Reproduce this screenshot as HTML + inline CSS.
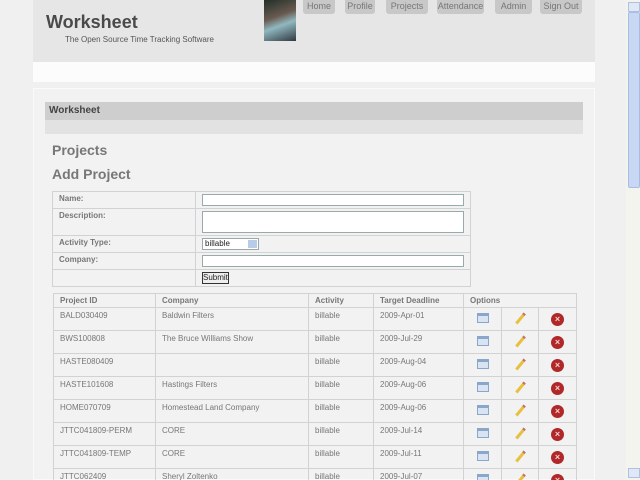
<!DOCTYPE html>
<html style="height:480px;overflow:hidden"><head><style>
*{margin:0;padding:0;box-sizing:border-box}
body{width:640px;height:480px;overflow:hidden;background:#f0f0f0;font-family:"Liberation Sans",sans-serif;position:relative}
.a{position:absolute}
.nav{position:absolute;top:0;height:14px;background:#c8c8c8;border-radius:0 0 3px 3px;color:#777;font-size:9px;text-align:center;line-height:13px}
table{border-collapse:collapse;position:absolute}
td{border:1px solid #d2d2d2;font-size:8px;color:#777;vertical-align:top;padding:3px 6px}
.f td{font-weight:bold;padding:2px 6px}
input.t{display:block;width:262px;height:12px;border:1px solid #9aa;background:#fff}
.cal{display:inline-block;width:12px;height:10px;border:1px solid #8aa6c8;background:#d8e4f2;border-top:3px solid #8aa6c8}
.x{display:inline-block;width:13px;height:13px;border-radius:50%;background:#b02828;color:#f4d0d0;font-size:9px;line-height:13px;text-align:center;font-weight:bold}
.p{display:inline-block;width:3px;height:13px;background:#e8c040;transform:rotate(40deg);border-top:2px solid #c07070}
.o td{text-align:center;vertical-align:middle;padding:0}
.o td.l{text-align:left;vertical-align:top;padding:3px 6px}
</style></head><body>
<div class="a" style="left:33px;top:0;width:562px;height:62px;background:#e6e6e6"></div>
<div class="a" style="left:33px;top:62px;width:562px;height:20px;background:#fcfcfc"></div>
<div class="a" style="left:46px;top:12px;font-size:18px;font-weight:bold;color:#4a4a4a">Worksheet</div>
<div class="a" style="left:65px;top:35px;font-size:8px;color:#555">The Open Source Time Tracking Software</div>
<div class="a" style="left:264px;top:0;width:32px;height:41px;background:linear-gradient(160deg,#203028,#6a5a50 40%,#90b8c0 60%,#303840)"></div>
<div class="nav" style="left:303px;width:32px">Home</div>
<div class="nav" style="left:345px;width:30px">Profile</div>
<div class="nav" style="left:386px;width:42px">Projects</div>
<div class="nav" style="left:437px;width:47px">Attendance</div>
<div class="nav" style="left:495px;width:37px">Admin</div>
<div class="nav" style="left:540px;width:42px">Sign Out</div>
<div class="a" style="left:33px;top:88px;width:562px;height:392px;background:#f2f2f2;border:1px solid #fafafa"></div>
<div class="a" style="left:45px;top:102px;width:538px;height:18px;background:#cecece;font-size:10px;font-weight:bold;color:#444;padding:3px 4px">Worksheet</div>
<div class="a" style="left:45px;top:120px;width:538px;height:14px;background:#e2e2e2"></div>
<div class="a" style="left:52px;top:142px;font-size:14px;font-weight:bold;color:#777">Projects</div>
<div class="a" style="left:52px;top:166px;font-size:14px;font-weight:bold;color:#777">Add Project</div>
<table class="f" style="left:52px;top:191px;width:419px">
<tr style="height:16px"><td style="width:145px">Name:</td><td><input class="t"></td></tr>
<tr style="height:27px"><td>Description:</td><td><div style="width:262px;height:22px;border:1px solid #9aa;background:#fff"></div></td></tr>
<tr style="height:17px"><td>Activity Type:</td><td><div style="width:57px;height:12px;border:1px solid #9aa;background:#fff;font-weight:normal;color:#222;padding-left:2px;position:relative">billable<span style="position:absolute;right:1px;top:1px;width:9px;height:8px;background:#b8cce8"></span></div></td></tr>
<tr style="height:17px"><td>Company:</td><td><input class="t"></td></tr>
<tr style="height:17px"><td></td><td><div style="width:27px;height:12px;border:1px solid #333;background:#eee;font-weight:normal;color:#222;font-size:8px;line-height:10px">Submit</div></td></tr>
</table>
<table class="o" style="left:53px;top:293px;width:524px">
<tr style="height:14px"><td style="width:102px;text-align:left;padding:2px 6px;font-weight:bold">Project ID</td><td style="width:153px;text-align:left;padding:2px 6px;font-weight:bold">Company</td><td style="width:65px;text-align:left;padding:2px 6px;font-weight:bold">Activity</td><td style="width:90px;text-align:left;padding:2px 6px;font-weight:bold">Target Deadline</td><td colspan="3" style="text-align:left;padding:2px 6px;font-weight:bold">Options</td></tr>
</table>
<table class="o" style="left:53px;top:307px;width:524px">
<tr style="height:23px"><td class="l" style="width:102px">BALD030409</td><td class="l" style="width:153px">Baldwin Filters</td><td class="l" style="width:65px">billable</td><td class="l" style="width:90px">2009-Apr-01</td><td style="width:38px"><span class="cal"></span></td><td style="width:37px"><span class="p"></span></td><td><span class="x">×</span></td></tr>
<tr style="height:23px"><td class="l">BWS100808</td><td class="l">The Bruce Williams Show</td><td class="l">billable</td><td class="l">2009-Jul-29</td><td><span class="cal"></span></td><td><span class="p"></span></td><td><span class="x">×</span></td></tr>
<tr style="height:23px"><td class="l">HASTE080409</td><td></td><td class="l">billable</td><td class="l">2009-Aug-04</td><td><span class="cal"></span></td><td><span class="p"></span></td><td><span class="x">×</span></td></tr>
<tr style="height:23px"><td class="l">HASTE101608</td><td class="l">Hastings Filters</td><td class="l">billable</td><td class="l">2009-Aug-06</td><td><span class="cal"></span></td><td><span class="p"></span></td><td><span class="x">×</span></td></tr>
<tr style="height:23px"><td class="l">HOME070709</td><td class="l">Homestead Land Company</td><td class="l">billable</td><td class="l">2009-Aug-06</td><td><span class="cal"></span></td><td><span class="p"></span></td><td><span class="x">×</span></td></tr>
<tr style="height:23px"><td class="l">JTTC041809-PERM</td><td class="l">CORE</td><td class="l">billable</td><td class="l">2009-Jul-14</td><td><span class="cal"></span></td><td><span class="p"></span></td><td><span class="x">×</span></td></tr>
<tr style="height:23px"><td class="l">JTTC041809-TEMP</td><td class="l">CORE</td><td class="l">billable</td><td class="l">2009-Jul-11</td><td><span class="cal"></span></td><td><span class="p"></span></td><td><span class="x">×</span></td></tr>
<tr style="height:23px"><td class="l">JTTC062409</td><td class="l">Sheryl Zoltenko</td><td class="l">billable</td><td class="l">2009-Jul-07</td><td><span class="cal"></span></td><td><span class="p"></span></td><td><span class="x">×</span></td></tr>
</table>
<div class="a" style="left:626px;top:0;width:14px;height:480px;background:#f4f4ee"></div>
<div class="a" style="left:628px;top:2px;width:12px;height:10px;background:#e0e8f8;border:1px solid #b0c0e0"></div>
<div class="a" style="left:628px;top:12px;width:12px;height:176px;background:#c8d8f4;border:1px solid #a8bce4;border-radius:2px"></div>
<div class="a" style="left:628px;top:468px;width:12px;height:10px;background:#e0e8f8;border:1px solid #b0c0e0"></div>
</body></html>
